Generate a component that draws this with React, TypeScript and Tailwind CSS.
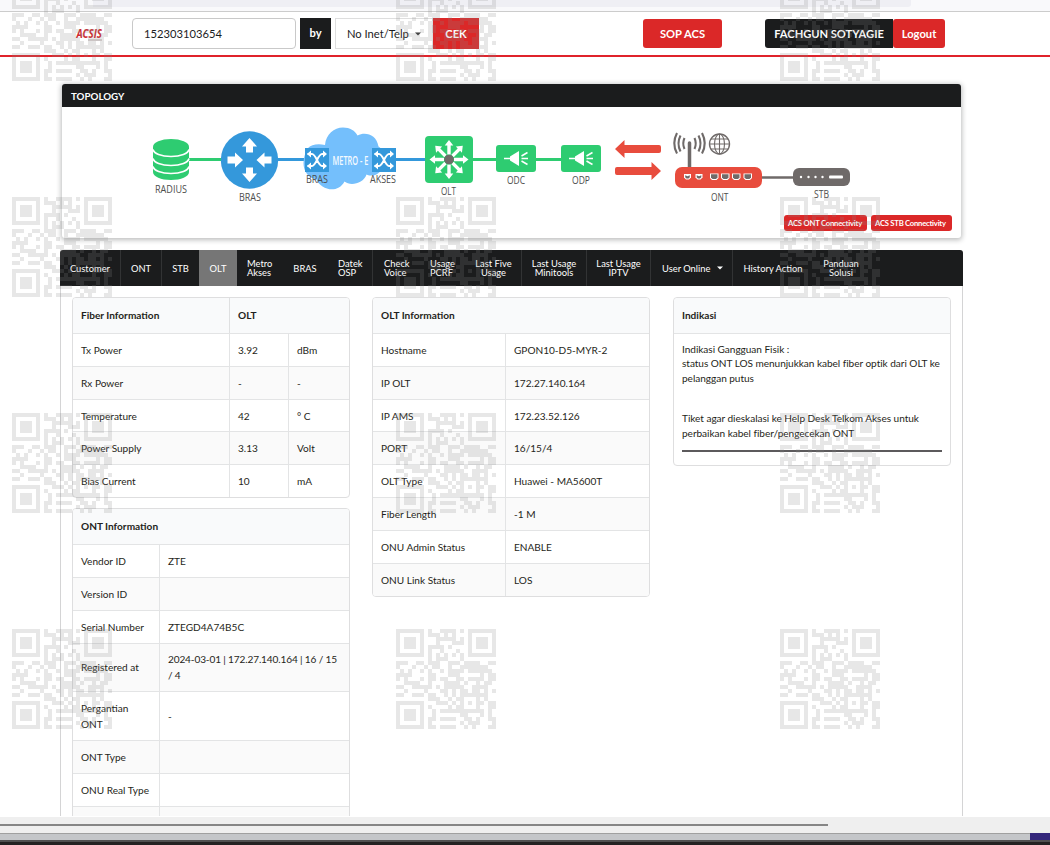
import React from "react";

const qrRows = [
  "1111111010011110101111111",
  "1000001011101010001000001",
  "1011101000111110101011101",
  "1011101000100011101011101",
  "1011101011110100001011101",
  "1000001010010001001000001",
  "1111111010101010101111111",
  "0000000010111000100000000",
  "1110011011100111011110011",
  "1000100101100100111111100",
  "0101001010010111101111110",
  "1111000011000111000001011",
  "1010001011011001101111011",
  "0011110010001111010010110",
  "1100111110101111100111100",
  "0010000100011010110110101",
  "1100111011001010111111100",
  "0000000011100101100010100",
  "1111111000111010101011011",
  "1000001010000101100010011",
  "1011101001011111111111010",
  "1011101001000000110001010",
  "1011101011011110011010011",
  "1000001010000000101110001",
  "1111111011011110010100011",
];

const qrPath = qrRows
  .map((row, y) =>
    row
      .split("")
      .map((cell, x) => (cell === "1" ? `M${x * 4} ${y * 4}h4v4h-4z` : ""))
      .join("")
  )
  .join("");

const Watermark = () => (
  <svg
    className="pointer-events-none absolute inset-0"
    width="1050"
    height="845"
    shapeRendering="crispEdges"
  >
    {[-19, 197, 413, 629].map((y) =>
      [12, 396, 780].map((x) => (
        <path
          key={`${x}-${y}`}
          d={qrPath}
          transform={`translate(${x} ${y})`}
          fill="#878787"
          fillOpacity="0.2"
        />
      ))
    )}
  </svg>
);

const Caret = ({ className }: { className?: string }) => (
  <svg className={className} width="6" height="4" viewBox="0 0 6 4">
    <path d="M0 0.5h6L3 3.5z" fill="currentColor" />
  </svg>
);

const Header = () => (
  <header className="flex h-[45px] shrink-0 items-center border-b-2 border-[#e0232b] bg-white pl-[76px] text-[11.2px]">
    <div className="flex w-[56px] flex-col">
      <svg
        className="overflow-visible"
        width="28"
        height="18"
        viewBox="0 0 28 18"
      >
        <text
          x="0.5"
          y="13"
          textLength="25.5"
          lengthAdjust="spacingAndGlyphs"
          fontFamily="Open Sans, sans-serif"
          fontSize="11.5"
          fontStyle="italic"
          fontWeight="700"
          fill="#cf2a30"
        >
          ACSIS
        </text>
        <path d="M12 15h14" stroke="#b9a9a9" strokeWidth="1" />
      </svg>
    </div>
    <input
      className="h-[31px] w-[164px] rounded-[4px] border border-[#c9c9c9] bg-white pl-[11px] text-[#1b1c1d] outline-none"
      defaultValue="152303103654"
    />
    <div className="ml-1 flex h-[31px] w-[31px] items-center justify-center bg-[#1b1c1d] font-bold text-white">
      by
    </div>
    <div className="ml-1 flex h-[31px] w-[98px] items-center border border-[#dedede] pt-px pl-[11px] text-[#1b1c1d]">
      <span>No Inet/Telp</span>
      <Caret className="ml-[6px] text-[#333]" />
    </div>
    <button className="h-[31px] w-[46px] bg-[#db2828] pt-px font-bold text-white">
      CEK
    </button>
    <button className="ml-[164px] h-[29px] w-[79px] rounded-[3px] bg-[#db2828] pt-px font-bold text-white">
      SOP ACS
    </button>
    <div className="ml-[43px] flex h-[29px] w-[128px] items-center justify-center rounded-l-[3px] bg-[#1b1c1d] pt-px font-bold tracking-[-0.05px] whitespace-nowrap text-white">
      FACHGUN SOTYAGIE
    </div>
    <button className="h-[29px] w-[52px] rounded-[3px] bg-[#db2828] pt-px font-bold text-white">
      Logout
    </button>
  </header>
);

const Label = ({
  x,
  y,
  w,
  children,
}: {
  x: number;
  y: number;
  w: number;
  children: string;
}) => (
  <text
    x={x}
    y={y}
    textLength={w}
    lengthAdjust="spacingAndGlyphs"
    fontFamily="Open Sans, sans-serif"
    fontSize="10"
    fill="#4d4d4d"
  >
    {children}
  </text>
);

const Shuffle = ({ x, y }: { x: number; y: number }) => (
  <g transform={`translate(${x} ${y})`}>
    <rect width="24" height="24" fill="#3498db" />
    <path
      d="M2.5 6h4.5c4 0 6 12 10 12h2M2.5 18h4.5c4 0 6-12 10-12h2"
      fill="none"
      stroke="#fff"
      strokeWidth="1.9"
    />
    <path
      d="M18 2.5l4 3.5-4 3.5zM18 14.5l4 3.5-4 3.5zM6 2.5L2 6l4 3.5zM6 14.5L2 18l4 3.5z"
      fill="#fff"
    />
  </g>
);

const Splitter = ({ x, y }: { x: number; y: number }) => (
  <g transform={`translate(${x} ${y})`}>
    <rect width="40" height="27" rx="3" fill="#2ecc71" />
    <path d="M14 11.5l9-5.5v15l-9-5.5z" fill="#fff" />
    <path
      d="M8 13.5h8M25.5 11l6-3.5M25.5 13.5h6.5M25.5 16l6 3.5"
      stroke="#fff"
      strokeWidth="1.5"
    />
  </g>
);

const TopologyDiagram = () => (
  <svg
    className="block"
    width="899"
    height="131"
    viewBox="62 107 899 131"
    fill="none"
  >
    <path d="M189 159.5h34" stroke="#2ecc71" strokeWidth="3" />
    <path d="M276 159.5h32M394 159.5h34" stroke="#3498db" strokeWidth="3" />
    <path d="M472 159.5h26M534 159.5h28" stroke="#2ecc71" strokeWidth="3" />

    {/* radius */}
    <path d="M153 147v25c0 4.5 8 8 18 8s18-3.5 18-8v-25z" fill="#2ecc71" />
    <ellipse cx="171" cy="147" rx="18" ry="8" fill="#2ecc71" />
    <path
      d="M153 149.5c1 4 8 7 18 7s17-3 18-7M153 158.5c1 4 8 7 18 7s17-3 18-7M153 166.5c1 4 8 7 18 7s17-3 18-7"
      stroke="#fff"
      strokeWidth="1.7"
    />
    <Label x={155} y={193} w={32}>RADIUS</Label>

    {/* bras */}
    <circle cx="249.5" cy="160" r="28.7" fill="#3498db" />
    <g fill="#fff">
      <path d="M249.5 138l7.5 8.5h-4v6h-7v-6h-4z" />
      <path d="M249.5 182l7.5-8.5h-4v-6h-7v6h-4z" />
      <path d="M243 160l-8-7.5v4h-7.5v7h7.5v4z" />
      <path d="M256.5 160l8-7.5v4h7v7h-7v4z" />
    </g>
    <Label x={239} y={201} w={22}>BRAS</Label>

    {/* metro cloud */}
    <path
      d="M325 145c1-11 9-17.5 18-17.5 7 0 12 3 14.5 8 8-4 19-1 21 11 8 4 9 26-5 29-3 0-6 0-7-1-3 9-16 12-22 7-7 13-24 8-28-2-14-3-16-18-9-31 4-4 10-5 17.5-3.5z"
      fill="#74bffc"
    />
    <Shuffle x={305} y={148} />
    <Shuffle x={372} y={148} />
    <text
      x="332.5"
      y="164.5"
      textLength="36"
      lengthAdjust="spacingAndGlyphs"
      fontFamily="Open Sans, sans-serif"
      fontSize="12"
      fontWeight="600"
      fill="#f4faff"
    >
      METRO - E
    </text>
    <Label x={306} y={183} w={22}>BRAS</Label>
    <Label x={370} y={183} w={26}>AKSES</Label>

    {/* olt */}
    <rect x="425" y="136" width="48" height="47" rx="4" fill="#2ecc71" />
    <g transform="translate(449 159.5)">
      {[0, 45, 90, 135, 180, 225, 270, 315].map((deg) => (
        <path
          key={deg}
          transform={`rotate(${deg})`}
          d="M-1.7-5v-9h-2.6l4.3-5.5 4.3 5.5h-2.6v9z"
          fill="#fff"
        />
      ))}
      <circle r="4.8" fill="#6f6a69" />
    </g>
    <Label x={441} y={195} w={15}>OLT</Label>

    <Splitter x={496} y={145} />
    <Splitter x={561} y={145} />
    <Label x={507} y={183.5} w={18}>ODC</Label>
    <Label x={572} y={183.5} w={18}>ODP</Label>

    {/* traffic arrows */}
    <path
      d="M615 149l9.5-9v5h34.5q2 0 2 2v4q0 2-2 2h-34.5v5z"
      fill="#e84c3d"
    />
    <path
      d="M661 171l-9.5-9v5h-34.5q-2 0-2 2v4q0 2 2 2h34.5v5z"
      fill="#e84c3d"
    />

    {/* ont */}
    <path
      d="M689.5 143v26"
      stroke="#6f6a69"
      strokeWidth="3.5"
      strokeLinecap="round"
    />
    <path
      d="M684.5 138q-2.5 5.5 0 11M680.5 135.5q-4 8 0 16M677 133q-5.5 10.5 0 20.5M694.5 138q2.5 5.5 0 11M698.5 135.5q4 8 0 16M702 133q5.5 10.5 0 20.5"
      stroke="#6f6a69"
      strokeWidth="2.1"
    />
    <g stroke="#6f6a69" strokeWidth="1.1">
      <circle cx="719.5" cy="144" r="10" strokeWidth="1.4" />
      <ellipse cx="719.5" cy="144" rx="5" ry="10" />
      <path d="M719.5 134v20M709.5 144h20M711 139h17M711 149h17" />
    </g>
    <path d="M761 177.5h33" stroke="#6f6a69" strokeWidth="2.5" />
    <rect x="675" y="167" width="87" height="21" rx="7" fill="#e84c3d" />
    {[684, 695.5].map((x) => (
      <g key={x} transform={`translate(${x} 174)`}>
        <path d="M0 0h7v3.5l-2 2h-3l-2-2z" fill="#fff" />
        <path d="M1.2 1.2v2l1.3 1.3h2l1.3-1.3v-2l-2.3 1z" fill="#6f6a69" />
      </g>
    ))}
    {[710, 721, 732, 743.5].map((x) => (
      <g key={x} transform={`translate(${x} 173.5)`}>
        <path d="M0 0h8.5v4.5l-2 2h-4.5l-2-2z" fill="#fff" />
        <path d="M1 0.8h6.5v3.2l-1.5 1.5h-3.5l-1.5-1.5z" fill="#6f6a69" />
      </g>
    ))}
    <Label x={711} y={201} w={17.5}>ONT</Label>

    {/* stb */}
    <rect x="793" y="168" width="57" height="18" rx="6" fill="#6f6a69" />
    <g fill="#fff">
      <circle cx="801" cy="177" r="1.2" />
      <circle cx="808.5" cy="177" r="1.2" />
      <circle cx="815.5" cy="177" r="1.2" />
      <circle cx="822.5" cy="177" r="1.2" />
      <rect x="829" y="175.5" width="14" height="3" rx="1" />
    </g>
    <Label x={814} y={197.5} w={15}>STB</Label>
  </svg>
);

const Topology = () => (
  <section className="relative mx-[62px] mt-[27px] h-[154px] w-[899px] shrink-0 rounded-[3px] bg-white shadow-[0_1px_5px_1px_rgba(34,36,38,0.3)]">
    <h2 className="flex h-[23px] items-center rounded-t-[3px] bg-[#1b1c1d] pt-px pl-[9px] text-[9.75px] font-bold text-white">
      TOPOLOGY
    </h2>
    <TopologyDiagram />
    <div className="absolute right-[9px] bottom-[7px] flex gap-1 text-[7.7px] font-bold whitespace-nowrap text-white">
      <button className="h-4 w-[83px] rounded-[3px] bg-[#db2828] pt-px pr-[3px] pl-1 text-left tracking-[-0.22px]">
        ACS ONT Connectivity
      </button>
      <button className="h-4 w-[81px] rounded-[3px] bg-[#db2828] pt-px pl-1 text-left tracking-[-0.25px]">
        ACS STB Connectivity
      </button>
    </div>
  </section>
);

const Tabs = () => (
  <nav className="flex h-9 shrink-0 rounded-t-[3px] bg-[#1b1c1d] text-[9.35px] leading-[9px] text-white">
    <div className="flex w-[61px] items-center justify-center border-r border-white/10">Customer</div>
    <div className="flex w-[41px] items-center justify-center border-r border-white/10">ONT</div>
    <div className="flex w-[37px] items-center justify-center">STB</div>
    <div className="flex w-[38px] items-center justify-center bg-[#767676]">OLT</div>
    <div className="flex w-[46px] items-center pl-[10px]">Metro<br />Akses</div>
    <div className="flex w-[44px] items-center justify-center">BRAS</div>
    <div className="flex w-[46px] items-center border-r border-white/10 pl-[11px]">Datek<br />OSP</div>
    <div className="flex w-[46px] items-center pl-[11px]">Check<br />Voice</div>
    <div className="flex w-[47px] items-center pl-[11px]">Usage<br />PCRF</div>
    <div className="flex w-[56px] items-center justify-center border-r border-white/10 text-center">Last Five<br />Usage</div>
    <div className="flex w-[65px] items-center justify-center border-r border-white/10 text-center">Last Usage<br />Minitools</div>
    <div className="flex w-[64px] items-center justify-center border-r border-white/10 text-center">Last Usage<br />IPTV</div>
    <div className="flex w-[82px] items-center border-r border-white/10 pl-[11px]">
      User Online
      <Caret className="ml-[7px]" />
    </div>
    <div className="flex w-[80px] items-center justify-center">History Action</div>
    <div className="flex w-[56px] items-center justify-center text-center">Panduan<br />Solusi</div>
  </nav>
);

const fiberRows = [
  ["Tx Power", "3.92", "dBm"],
  ["Rx Power", "-", "-"],
  ["Temperature", "42", "° C"],
  ["Power Supply", "3.13", "Volt"],
  ["Bias Current", "10", "mA"],
];

const oltRows = [
  ["Hostname", "GPON10-D5-MYR-2"],
  ["IP OLT", "172.27.140.164"],
  ["IP AMS", "172.23.52.126"],
  ["PORT", "16/15/4"],
  ["OLT Type", "Huawei - MA5600T"],
  ["Fiber Length", "-1 M"],
  ["ONU Admin Status", "ENABLE"],
  ["ONU Link Status", "LOS"],
];

const ontRows = [
  ["Vendor ID", "ZTE"],
  ["Version ID", ""],
  ["Serial Number", "ZTEGD4A74B5C"],
  ["Registered at", "2024-03-01 | 172.27.140.164 | 16 / 15\n/ 4"],
  ["Pergantian\nONT", "-"],
  ["ONT Type", ""],
  ["ONU Real Type", ""],
  ["", ""],
];

const DataTable = ({
  head,
  headGrid,
  grid,
  rows,
}: {
  head: string[];
  headGrid: string;
  grid: string;
  rows: string[][];
}) => (
  <div className="w-[278px] overflow-hidden rounded-[4px] border border-[#dededf] bg-white">
    <div className={`grid h-[35px] bg-[#f9fafb] font-bold ${headGrid}`}>
      {head.map((title, i) => (
        <div
          key={title}
          className={`flex items-center px-2 pb-px ${i > 0 ? "border-l border-[#dfe0e1]" : ""}`}
        >
          {title}
        </div>
      ))}
    </div>
    {rows.map((row, r) => (
      <div
        key={r}
        className={`grid min-h-[32.82px] border-t border-[#e3e4e5] ${grid} ${r % 2 ? "bg-[#fafafa]" : ""}`}
      >
        {row.map((cell, i) => (
          <div
            key={i}
            className={`flex items-center py-[7.9px] pl-2 whitespace-pre ${i > 0 ? "border-l border-[#e3e4e5]" : ""} ${cell.length > 20 ? "tracking-[-0.14px]" : ""}`}
          >
            {cell}
          </div>
        ))}
      </div>
    ))}
  </div>
);

const Indikasi = () => (
  <div className="h-[169px] w-[278px] rounded-[4px] border border-[#dededf] bg-white">
    <div className="flex h-[35px] items-center rounded-t-[4px] bg-[#f9fafb] px-2 pb-px font-bold">
      Indikasi
    </div>
    <div className="border-t border-[#e3e4e5] px-2 pt-[7.6px] leading-[14.6px] tracking-[-0.04px] whitespace-nowrap">
      <p>
        Indikasi Gangguan Fisik :
        <br />
        status ONT LOS menunjukkan kabel fiber optik dari OLT ke
        <br />
        pelanggan putus
      </p>
      <p className="mt-[26px]">
        Tiket agar dieskalasi ke Help Desk Telkom Akses untuk
        <br />
        perbaikan kabel fiber/pengecekan ONT
      </p>
      <hr className="mt-[9.4px] border-t-2 border-[#5c5a5c]" />
    </div>
  </div>
);

const App = () => {
  return (
    <div className="relative flex h-[845px] w-[1050px] flex-col overflow-hidden bg-white font-['Lato',sans-serif] text-[#1f1f20]">
      <div className="h-3 shrink-0 border-b border-[#cccccc] bg-[#f9f9fb]">
        <div className="ml-[93px] h-[7px] w-[818px] rounded-br-[3px] bg-[#efeff4]" />
      </div>
      <Header />

      <main className="flex min-h-0 flex-1 flex-col overflow-hidden">
        <Topology />
        <div className="mt-3 ml-[60px] flex min-h-0 w-[903px] flex-1 flex-col">
          <Tabs />
          <div className="flex min-h-0 flex-1 items-start overflow-hidden border-x border-[#d4d4d5] pt-[11px] pl-[11px] text-[10.08px] leading-4">
            <div className="flex w-[278px] flex-col gap-[10px]">
              <DataTable
                head={["Fiber Information", "OLT"]}
                headGrid="grid-cols-[156px_1fr]"
                grid="grid-cols-[156px_59px_1fr]"
                rows={fiberRows}
              />
              <DataTable
                head={["ONT Information"]}
                headGrid="grid-cols-1"
                grid="grid-cols-[86px_1fr]"
                rows={ontRows}
              />
            </div>
            <div className="ml-[22px]">
              <DataTable
                head={["OLT Information"]}
                headGrid="grid-cols-1"
                grid="grid-cols-[132px_1fr]"
                rows={oltRows}
              />
            </div>
            <div className="ml-[23px]">
              <Indikasi />
            </div>
          </div>
        </div>
      </main>

      <footer className="mt-px shrink-0">
        <div className="h-4 bg-[#efefef] pt-[7px]">
          <div className="h-[2px] w-[828px] bg-[#868686]" />
        </div>
        <div className="flex h-[7px] justify-end border-t border-[#a0a0a0] bg-[#c4c6c9]">
          <div className="-mt-px h-[7px] w-5 bg-[#34277b]" />
        </div>
        <div className="h-[5px] border-t-2 border-[#505050] bg-[#242222]" />
      </footer>

      <Watermark />
    </div>
  );
};

export default App;
